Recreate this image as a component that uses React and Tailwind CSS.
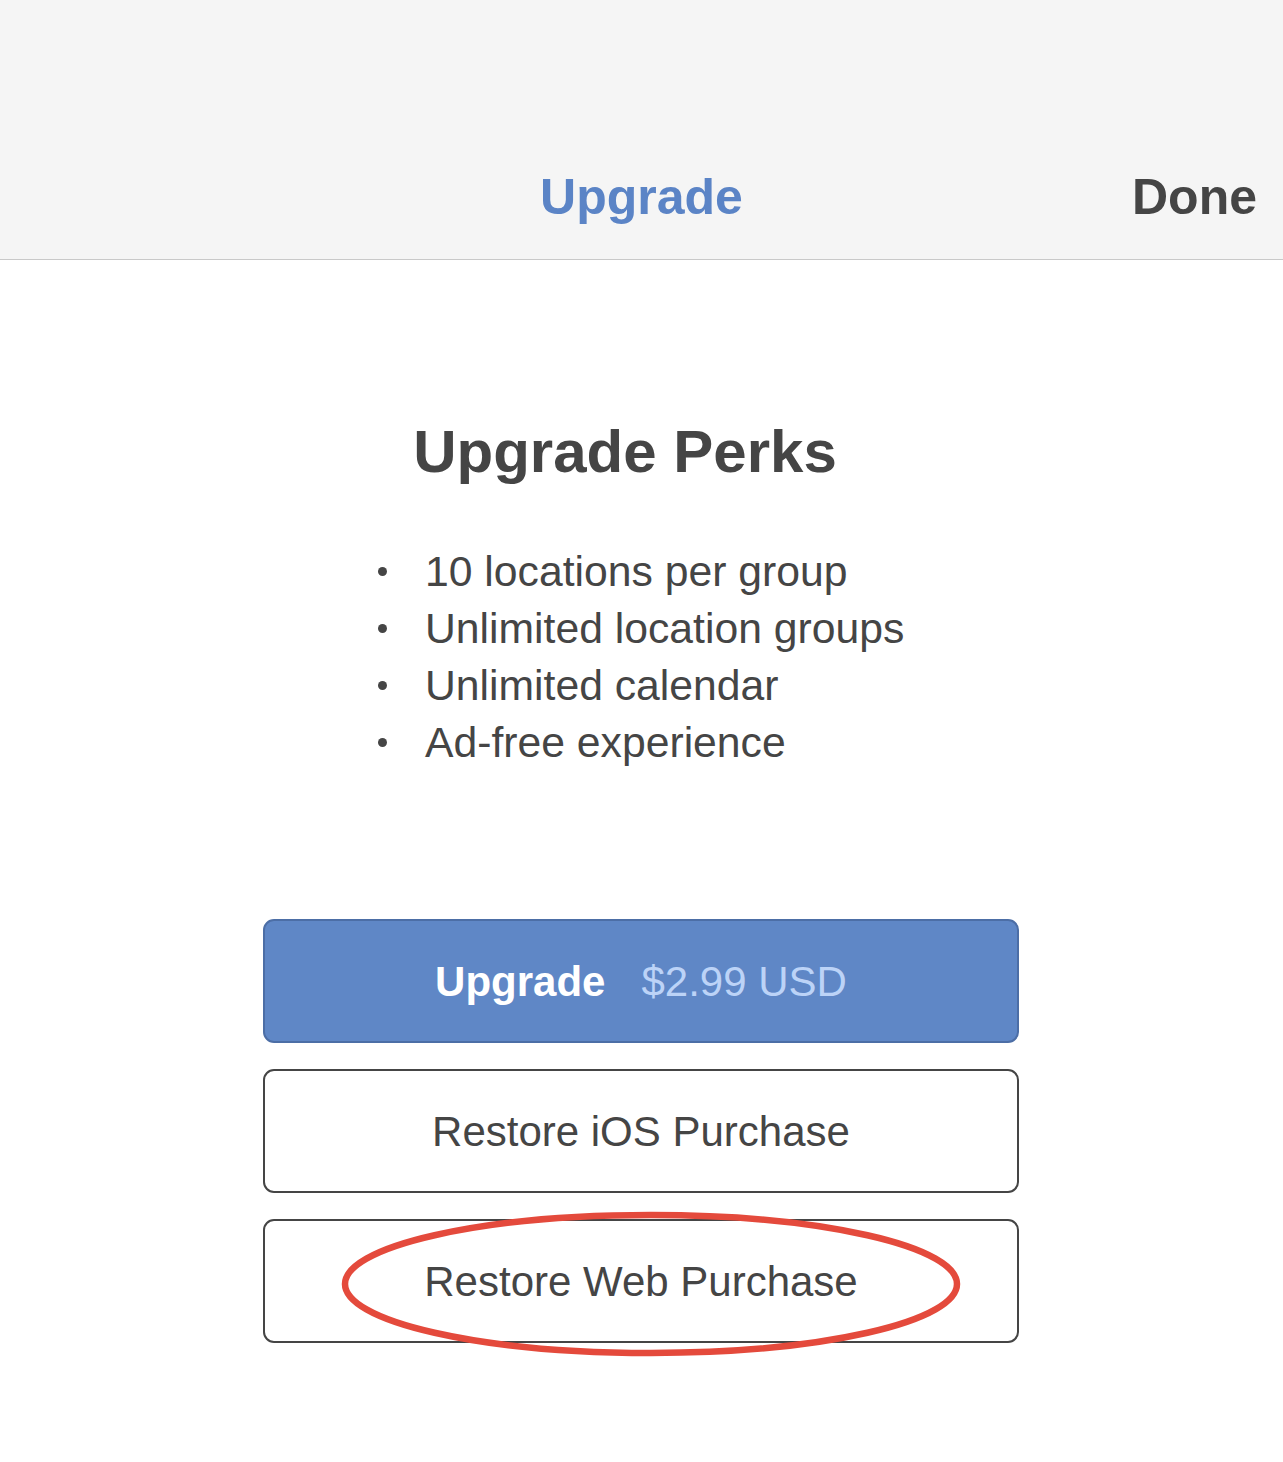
import React from 'react'

const perks = [
  '10 locations per group',
  'Unlimited location groups',
  'Unlimited calendar',
  'Ad-free experience',
]

export default function App() {
  return (
    <div className="min-h-[1462px] bg-white text-[#454545] font-['Liberation_Sans',Arial,sans-serif]">
      <header className="h-[260px] bg-[#f5f5f5] border-b border-[#c9c9c9] pt-[167px]">
        <div className="grid grid-cols-3 text-[50px] leading-[60px] font-bold">
          <div />
          <div className="text-center text-[#5b84c6]">Upgrade</div>
          <div className="text-right pr-[26px] text-[#454545]">Done</div>
        </div>
      </header>

      <main className="flex flex-col">
        <h1 className="mt-[162px] text-center pr-[33px] text-[60px] leading-[60px] font-bold">
          Upgrade Perks
        </h1>

        <ul className="mt-[61px] pl-[377px] flex flex-col text-[42.7px] leading-[57px]">
          {perks.map((p) => (
            <li key={p} className="flex items-center">
              <span className="w-[10px] h-[10px] flex items-center justify-center">
                <span className="w-[9px] h-[9px] rounded-full bg-[#454545]" />
              </span>
              <span className="ml-[38px]">{p}</span>
            </li>
          ))}
        </ul>

        <div className="mt-[148px] ml-[263px] w-[756px] flex flex-col gap-[26px]">
          <button className="h-[124px] rounded-[11px] bg-[#5f87c6] border-2 border-[#4c6ea6] flex items-center justify-center gap-[36px] text-[42px]">
            <span className="font-bold text-white">Upgrade</span>
            <span className="text-[#bcd3f7]">$2.99 USD</span>
          </button>
          <button className="h-[124px] rounded-[11px] bg-white border-2 border-[#454545] flex items-center justify-center text-[42px] text-[#454545]">
            Restore iOS Purchase
          </button>
          <button className="relative h-[124px] rounded-[11px] bg-white border-2 border-[#454545] flex items-center justify-center text-[42px] text-[#454545]">
            Restore Web Purchase
            <svg
              className="absolute left-[71px] top-[-15px] overflow-visible pointer-events-none"
              width="630"
              height="156"
              viewBox="0 0 630 156"
            >
              <ellipse cx="315" cy="78" rx="306" ry="69" fill="none" stroke="#e44a3c" strokeWidth="6.5" />
            </svg>
          </button>
        </div>
      </main>
    </div>
  )
}
